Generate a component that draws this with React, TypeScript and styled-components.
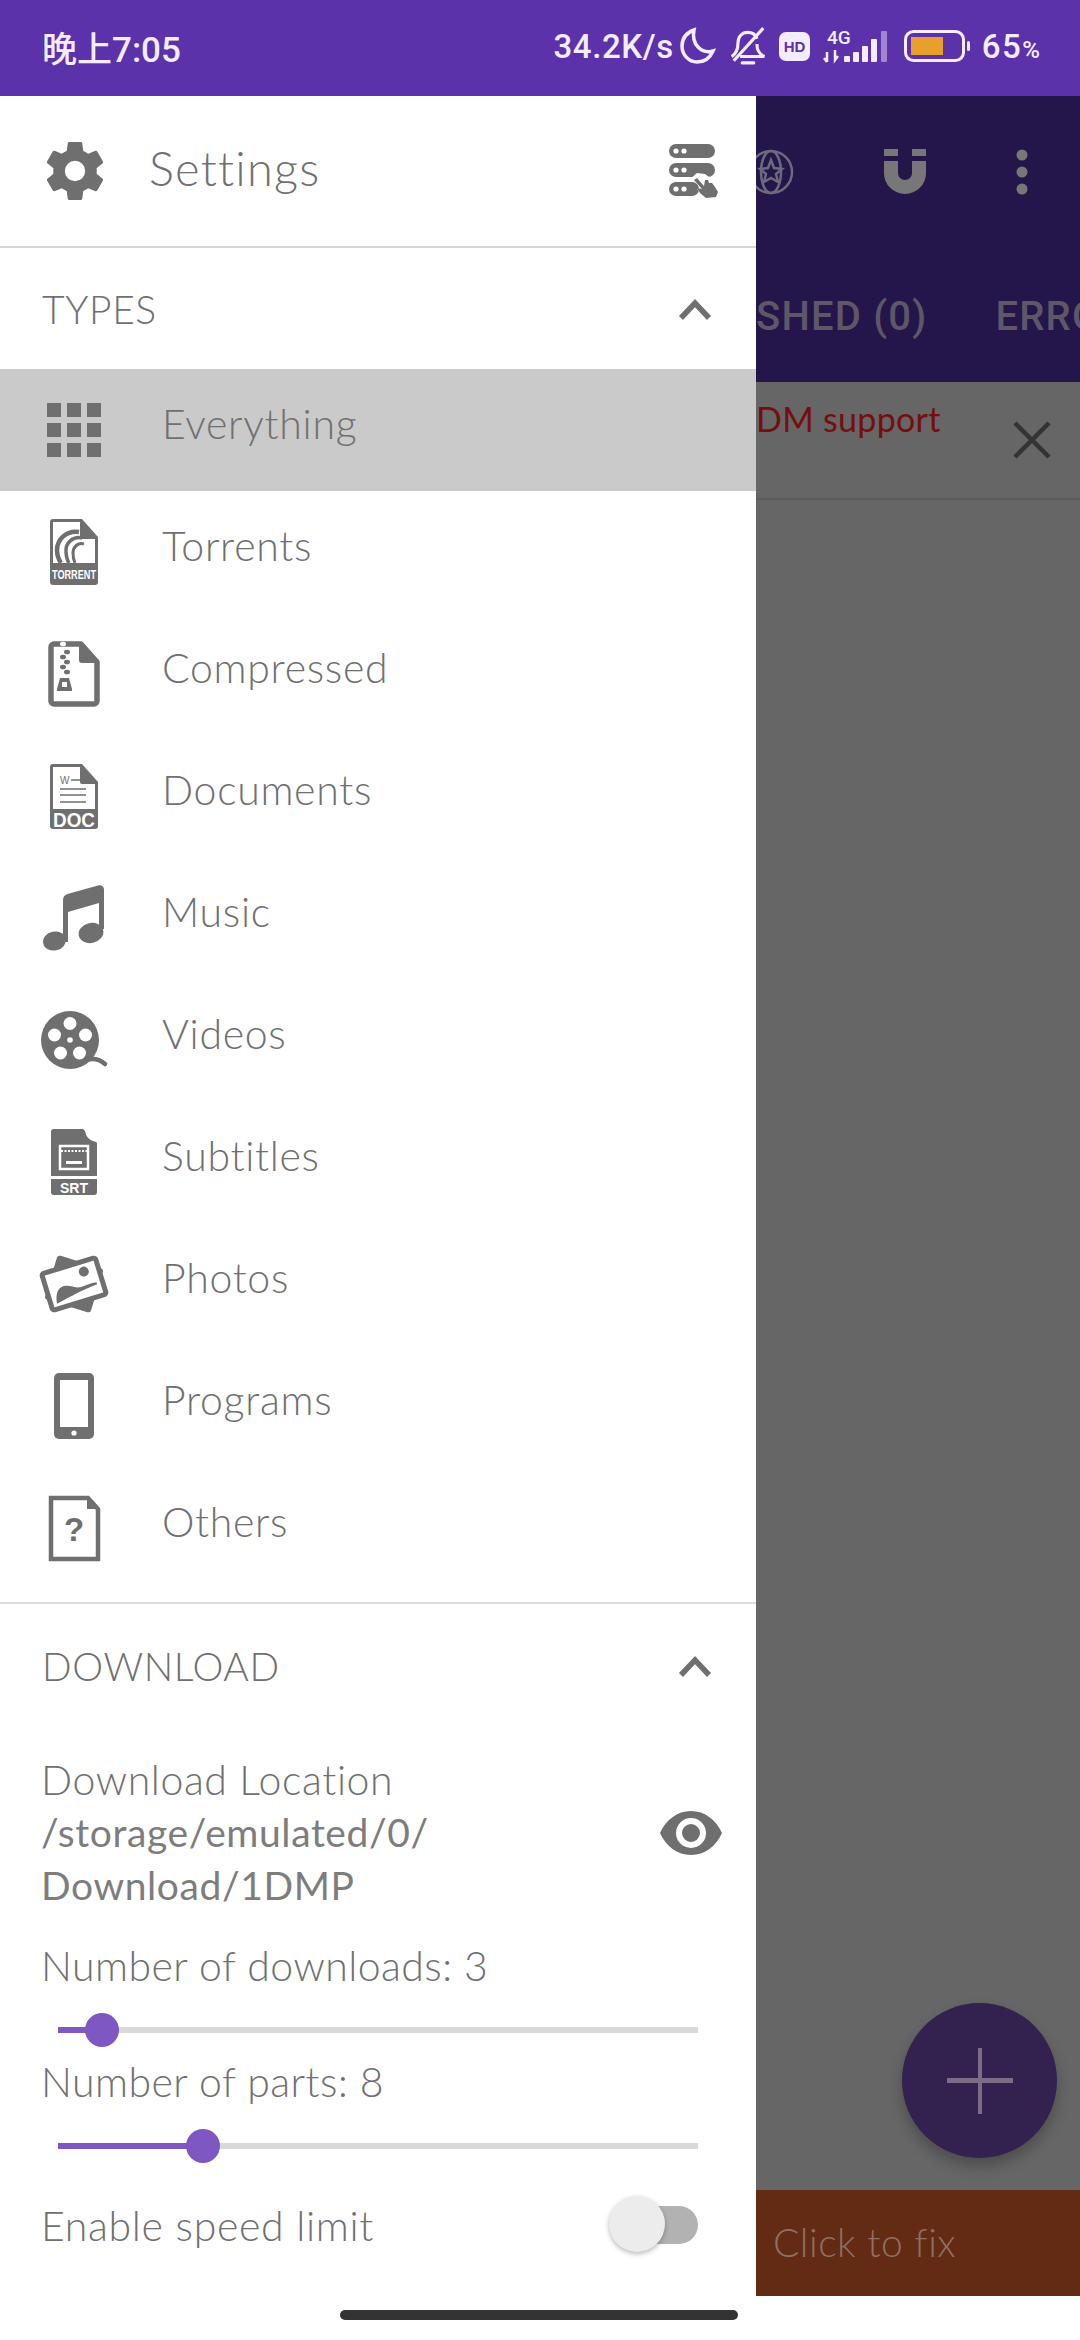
import React from "react";
import styled, { createGlobalStyle } from "styled-components";

const Global = createGlobalStyle`
  html, body { margin: 0; padding: 0; background: #fff; }
  * { box-sizing: border-box; }
`;

const GREY = "#707070";

const Screen = styled.div`
  position: relative;
  width: 1080px;
  height: 2340px;
  display: flex;
  flex-direction: column;
  overflow: hidden;
  font-family: "Lato", "Liberation Sans", sans-serif;
  background: #fff;
`;

const StatusBar = styled.header`
  height: 96px;
  flex: none;
  display: flex;
  align-items: center;
  justify-content: space-between;
  padding: 0 40px 4px 42px;
  background: #5b32a9;
  color: #f3ecfc;
  font-weight: 500;
`;
const Clock = styled.span`
  font-size: 35px;
  letter-spacing: 0;
  font-family: "Roboto", "Noto Sans CJK SC", sans-serif;
`;
const StatusRight = styled.div`
  display: flex;
  align-items: center;
`;
const Speed = styled.span`
  font-size: 33px;
  font-family: "Roboto", sans-serif;
  letter-spacing: 0.6px;
  margin-right: 6px;
`;
const StatusIcon = styled.svg<{ $gap: number }>`
  display: block;
  overflow: visible;
  margin-right: ${(p) => p.$gap}px;
`;
const Percent = styled.span`
  font-size: 33px;
  font-family: "Roboto", sans-serif;
  letter-spacing: 1.5px;
  small { font-size: 24px; letter-spacing: 0; }
`;

const Body = styled.div`
  flex: 1;
  display: flex;
  min-height: 0;
`;

const Drawer = styled.nav`
  width: 756px;
  flex: none;
  display: flex;
  flex-direction: column;
  background: #fff;
  color: ${GREY};
  font-weight: 300;
`;
const DrawerHead = styled.div`
  height: 152px;
  flex: none;
  display: flex;
  align-items: center;
  padding: 0 36px 0 47px;
  border-bottom: 2px solid #d6d6d6;
`;
const HeadTitle = styled.span`
  flex: 1;
  margin-left: 46px;
  padding-bottom: 6px;
  font-size: 47px;
  letter-spacing: 1.2px;
`;
const SectionHead = styled.div<{ $h: number }>`
  height: ${(p) => p.$h}px;
  flex: none;
  display: flex;
  align-items: center;
  justify-content: space-between;
  padding: 0 44px 0 42px;
  font-size: 39px;
  letter-spacing: 0.6px;
`;
const Row = styled.div<{ $active?: boolean }>`
  height: 122px;
  flex: none;
  display: flex;
  align-items: center;
  padding-left: 36px;
  background: ${(p) => (p.$active ? "#cacaca" : "#fff")};
`;
const RowIcon = styled.div`
  width: 76px;
  height: 76px;
  flex: none;
  display: flex;
  align-items: center;
  justify-content: center;
  svg { display: block; overflow: visible; }
`;
const RowLabel = styled.span`
  margin-left: 50px;
  padding-bottom: 14px;
  font-size: 41px;
  letter-spacing: 0.7px;
`;
const Rule = styled.div`
  height: 2px;
  flex: none;
  margin-top: 13px;
  background: #dcdcdc;
`;
const Location = styled.div`
  padding: 27px 34px 33px 41px;
  flex: none;
`;
const Line = styled.div`
  height: 52px;
  line-height: 52px;
  font-size: 41px;
  letter-spacing: 0.6px;
  white-space: nowrap;
`;
const PathRow = styled.div`
  display: flex;
  align-items: flex-start;
  justify-content: space-between;
`;
const PathText = styled.div`
  font-weight: 400;
  color: #7d7d7d;
  font-size: 39px;
  line-height: 52.5px;
  letter-spacing: 0.6px;
`;
const EyeBox = styled.div`
  margin-top: 5px;
  svg { display: block; }
`;
const SettingLabel = styled.div`
  height: 44px;
  line-height: 44px;
  padding-left: 41px;
  font-size: 41px;
  letter-spacing: 0.45px;
  flex: none;
`;
const SliderWrap = styled.div`
  height: 60px;
  margin: 12px 58px 0;
  flex: none;
  display: flex;
  align-items: center;
`;
const Track = styled.div`
  position: relative;
  width: 100%;
  height: 6px;
  background: #d9d9d9;
`;
const Fill = styled.div`
  height: 100%;
  background: #7e57c2;
`;
const Thumb = styled.div`
  position: absolute;
  top: -14px;
  width: 34px;
  height: 34px;
  margin-left: -17px;
  border-radius: 50%;
  background: #7e57c2;
`;
const SwitchRow = styled.div`
  height: 98px;
  flex: none;
  display: flex;
  align-items: center;
  justify-content: space-between;
  padding: 0 58px 0 41px;
  font-size: 41px;
  letter-spacing: 0.7px;
`;
const SwitchTrack = styled.div`
  position: relative;
  width: 76px;
  height: 38px;
  border-radius: 19px;
  background: #b2b2b2;
`;
const SwitchKnob = styled.div`
  position: absolute;
  left: -13px;
  top: -10px;
  width: 56px;
  height: 56px;
  border-radius: 50%;
  background: #ececec;
  box-shadow: 0 2px 5px rgba(0, 0, 0, 0.28);
`;

const Behind = styled.main`
  flex: 1;
  min-width: 0;
  display: flex;
  flex-direction: column;
  overflow: hidden;
  position: relative;
`;
const AppBar = styled.div`
  height: 286px;
  flex: none;
  background: #24164a;
  display: flex;
  flex-direction: column;
`;
const ActionRow = styled.div`
  height: 152px;
  flex: none;
  display: flex;
  align-items: center;
  svg { display: block; flex: none; }
`;
const Tabs = styled.div`
  display: flex;
  flex: 1;
  align-items: center;
  padding-top: 2px;
  color: #5e5768;
  font-family: "Roboto", sans-serif;
  font-weight: 500;
  font-size: 40px;
  letter-spacing: 1.2px;
  white-space: nowrap;
`;
const Tab = styled.span<{ $ml: number }>`
  margin-left: ${(p) => p.$ml}px;
`;
const Banner = styled.div`
  height: 118px;
  flex: none;
  display: flex;
  justify-content: space-between;
  background: #666;
  border-bottom: 2px solid #5c5c5c;
  color: #750f0f;
  font-size: 34px;
  font-weight: 400;
  letter-spacing: 0.3px;
  padding: 16px 28px 0 0;
  white-space: nowrap;
`;
const BannerClose = styled.svg`
  display: block;
  margin-top: 22px;
`;
const Scrim = styled.div`
  flex: 1;
  background: #666;
`;
const Warning = styled.div`
  height: 106px;
  flex: none;
  background: #632a14;
  color: #8f7062;
  font-size: 39px;
  font-weight: 300;
  letter-spacing: 0.5px;
  line-height: 104px;
  padding-left: 17px;
  white-space: nowrap;
`;
const Foot = styled.div`
  height: 44px;
  flex: none;
  background: #fff;
`;
const Fab = styled.div`
  position: absolute;
  left: 146px;
  top: 1907px;
  width: 155px;
  height: 155px;
  border-radius: 50%;
  background: #33214f;
  box-shadow: 0 8px 14px rgba(0, 0, 0, 0.25);
  display: flex;
  align-items: center;
  justify-content: center;
`;
const HomeBar = styled.div`
  position: absolute;
  left: 340px;
  top: 2310px;
  width: 398px;
  height: 10px;
  border-radius: 5px;
  background: #333;
`;

const C = "#6f6f6f";

const Gear = () => (
  <svg width="56" height="58" viewBox="2.6 2 18.8 20" fill={C}>
    <path fillRule="evenodd" d="M19.43 12.98c.04-.32.07-.64.07-.98s-.03-.66-.07-.98l2.11-1.65a.5.5 0 0 0 .12-.64l-2-3.46a.5.5 0 0 0-.61-.22l-2.49 1a7.3 7.3 0 0 0-1.69-.98l-.38-2.65A.49.49 0 0 0 14 2h-4a.49.49 0 0 0-.49.42l-.38 2.65c-.61.25-1.17.59-1.69.98l-2.49-1a.49.49 0 0 0-.61.22l-2 3.46a.49.49 0 0 0 .12.64l2.11 1.65c-.04.32-.07.65-.07.98s.03.66.07.98l-2.11 1.65a.5.5 0 0 0-.12.64l2 3.46c.12.22.39.3.61.22l2.49-1c.52.4 1.08.73 1.69.98l.38 2.65c.03.24.24.42.49.42h4c.25 0 .46-.18.49-.42l.38-2.65c.61-.25 1.17-.59 1.69-.98l2.49 1c.23.09.49 0 .61-.22l2-3.46a.5.5 0 0 0-.12-.64l-2.11-1.65zM12 15.5a3.5 3.5 0 1 1 0-7 3.5 3.5 0 0 1 0 7z" />
  </svg>
);

const ServerHand = () => (
  <svg width="52" height="54" viewBox="0 0 52 54">
    <rect x="1" y="0" width="46" height="14" rx="7" fill={C} />
    <rect x="1" y="19" width="46" height="14" rx="7" fill={C} />
    <rect x="1" y="38" width="30" height="14" rx="7" fill={C} />
    {[8, 16].map((x) =>
      [7, 26, 45].map((y) => <circle key={`${x}${y}`} cx={x} cy={y} r="2.6" fill="#fff" />)
    )}
    <path d="M22 35l7-6 8 1 11 8 4 10-3 6-11-1-9-8 5-1-9-9z" fill="#fff" />
    <path d="M26 36l3-2 7 8 1-6 3 0 1 3 3 0 3 4 3 5-2 5-10 1-6-5-3-5 5 1z" fill={C} />
  </svg>
);

const Chevron = () => (
  <svg width="34" height="22" viewBox="0 0 34 22" fill="none" stroke={C} strokeWidth="5.5">
    <path d="M3 20L17 5l14 15" />
  </svg>
);

const Grid = () => (
  <svg width="54" height="54" viewBox="0 0 54 54" fill={C}>
    {[0, 20, 40].map((y) =>
      [0, 20, 40].map((x) => <rect key={`${x}-${y}`} x={x} y={y} width="14" height="14" />)
    )}
  </svg>
);

const Torrent = () => (
  <svg width="48" height="66" viewBox="0 0 48 66">
    <path d="M3 0h29l16 18v45a3 3 0 0 1-3 3H3a3 3 0 0 1-3-3V3a3 3 0 0 1 3-3z" fill={C} />
    <path d="M3 3h27v15a2 2 0 0 0 2 2h13v24H3z" fill="#fff" />
    <g fill="none" stroke={C}>
      <path d="M29 13C17 11 7 20 7 31c0 5 2 10 4 13" strokeWidth="4.5" />
      <path d="M32 19c-9-2-17 5-16 14 .3 4 1 8 3 11" strokeWidth="3.5" />
      <path d="M34 25c-6-2-11 3-11 9 0 4 1 8 2 10" strokeWidth="3" />
    </g>
    <text x="24" y="60" textAnchor="middle" textLength="44" lengthAdjust="spacingAndGlyphs" fontFamily="Liberation Sans, sans-serif" fontWeight="700" fontSize="13" fill="#fff">TORRENT</text>
  </svg>
);

const Zip = () => (
  <svg width="52" height="66" viewBox="0 0 52 66">
    <path d="M6 3h27l16 18v39a3 3 0 0 1-3 3H6a3 3 0 0 1-3-3V6a3 3 0 0 1 3-3z" fill="none" stroke={C} strokeWidth="5.5" strokeLinejoin="round" />
    <path d="M31 2l19 20H34a3 3 0 0 1-3-3z" fill={C} />
    {[[15, 3], [19, 11], [15, 16], [19, 21], [15, 26], [19, 31]].map(([x, y], i) => (
      <ellipse key={y} cx={x} cy={y} rx="3" ry="2.3" fill={i === 0 ? "#fff" : C} />
    ))}
    <path d="M12 37h9l3 11v2H9v-2z" fill={C} />
    <rect x="14" y="41" width="5" height="5" fill="#fff" />
  </svg>
);

const Doc = () => (
  <svg width="48" height="65" viewBox="0 0 48 65">
    <path d="M3 0h29l16 18v44a3 3 0 0 1-3 3H3a3 3 0 0 1-3-3V3a3 3 0 0 1 3-3z" fill={C} />
    <path d="M3 3h27v15a2 2 0 0 0 2 2h13v25H3z" fill="#fff" />
    <text x="10" y="20" fontFamily="Liberation Sans, sans-serif" fontSize="10" fill={C}>W</text>
    <g stroke={C} strokeWidth="1.6">
      <path d="M21 16h9M10 25h26M10 31h26M10 38h26" />
    </g>
    <text x="24" y="63" textAnchor="middle" textLength="42" lengthAdjust="spacingAndGlyphs" fontFamily="Liberation Sans, sans-serif" fontWeight="700" fontSize="20" fill="#fff">DOC</text>
  </svg>
);

const Music = () => (
  <svg width="62" height="66" viewBox="0 0 62 66" fill={C}>
    <path d="M20 15c0-3 1.500-5 4.500-6L55 .5c3.500-1 6 1 6 4V44h-5V18l-31 9v30h-5z" />
    <ellipse cx="11.500" cy="56" rx="11.500" ry="9.500" transform="rotate(-12 11.500 56)" />
    <ellipse cx="48" cy="48" rx="12.500" ry="10" transform="rotate(-12 48 48)" />
  </svg>
);

const Film = () => (
  <svg width="67" height="58" viewBox="0 0 67 58">
    <circle cx="29" cy="29" r="29" fill={C} />
    {[[29, 12.500], [13.500, 24], [19.500, 42], [38.500, 42], [44.500, 24]].map(([x, y]) => (
      <circle key={x} cx={x} cy={y} r="6.500" fill="#fff" />
    ))}
    <circle cx="29" cy="29" r="2.800" fill="#fff" />
    <path d="M46 49c6-2 12-1 18 4" fill="none" stroke={C} strokeWidth="4.500" strokeLinecap="round" />
  </svg>
);

const Srt = () => (
  <svg width="46" height="66" viewBox="0 0 46 66">
    <path d="M3 0h29l14 14v33H0V3a3 3 0 0 1 3-3z" fill={C} />
    <path d="M34 0c0 7 4 12 12 13V0z" fill="#fff" />
    <path d="M0 50h46v13a3 3 0 0 1-3 3H3a3 3 0 0 1-3-3z" fill={C} />
    <rect x="9" y="17" width="28" height="23" fill="none" stroke="#fff" strokeWidth="2.500" />
    <path d="M10 22h26" stroke="#fff" strokeWidth="2" strokeDasharray="2 1.500" />
    <rect x="15" y="32" width="16" height="3" fill="#fff" />
    <text x="23" y="64" textAnchor="middle" fontFamily="Liberation Sans, sans-serif" fontWeight="700" fontSize="14" fill="#fff">SRT</text>
  </svg>
);

const Photos = () => (
  <svg width="66" height="62" viewBox="0 0 66 62">
    <rect x="9" y="8" width="48" height="46" rx="3" fill={C} transform="rotate(17 33 31)" />
    <g transform="rotate(-17 33 31)">
      <rect x="5" y="12" width="56" height="38" rx="2" fill="#fff" stroke={C} strokeWidth="5" />
      <circle cx="46" cy="22" r="5" fill={C} />
      <path d="M11 45c1-9 5-15 11-15 7 0 11 6 17 6 6 0 10-1 16 0v2c-14 1-30 4-44 7z" fill={C} />
    </g>
  </svg>
);

const Phone = () => (
  <svg width="40" height="66" viewBox="0 0 40 66">
    <rect width="40" height="66" rx="5" fill={C} />
    <rect x="6" y="7" width="28" height="47" fill="#fff" />
    <circle cx="20" cy="60" r="2.600" fill="#fff" />
  </svg>
);

const Other = () => (
  <svg width="52" height="66" viewBox="0 0 52 66">
    <path d="M3 3h37l10 11v50H3z" fill="none" stroke={C} strokeWidth="4.500" />
    <path d="M39 1l12 13H39z" fill={C} />
    <text x="26" y="46" textAnchor="middle" fontFamily="Liberation Sans, sans-serif" fontWeight="700" fontSize="33" fill={C}>?</text>
  </svg>
);

const Eye = () => (
  <svg width="62" height="44" viewBox="0 0 62 44">
    <path fillRule="evenodd" fill={C} d="M31 0C17 0 6 9 0 22c6 13 17 22 31 22s25-9 31-22C56 9 45 0 31 0zm0 37a15 15 0 1 1 0-30 15 15 0 0 1 0 30zm0-24a9 9 0 1 0 0 18 9 9 0 0 0 0-18z" />
  </svg>
);

const items: [string, React.ReactNode][] = [
  ["Everything", <Grid />],
  ["Torrents", <Torrent />],
  ["Compressed", <Zip />],
  ["Documents", <Doc />],
  ["Music", <Music />],
  ["Videos", <Film />],
  ["Subtitles", <Srt />],
  ["Photos", <Photos />],
  ["Programs", <Phone />],
  ["Others", <Other />],
];

const Slider = ({ at }: { at: number }) => (
  <SliderWrap>
    <Track>
      <Fill style={{ width: at }} />
      <Thumb style={{ left: at }} />
    </Track>
  </SliderWrap>
);

export default function App() {
  return (
    <Screen>
      <Global />
      <StatusBar>
        <Clock>晚上7:05</Clock>
        <StatusRight>
          <Speed>34.2K/s</Speed>
          <StatusIcon $gap={14} width="35" height="36" viewBox="0 0 35 36" fill="none" stroke="#f3ecfc" strokeWidth="3.500">
            <path d="M14 2C6 5 2 11 2 18c0 9 7 16 15 16 7 0 13-4 16-11-11 3-22-6-19-21z" />
          </StatusIcon>
          <StatusIcon $gap={12} width="38" height="40" viewBox="0 0 35 38" fill="none" stroke="#f3ecfc" strokeWidth="3">
            <path d="M2 29c5-3 6-8 6-13 0-6 4-10 9-10s8 3 9 6M26 17c0 5 1 9 7 12H10" />
            <path d="M4 33L32 2" />
            <path d="M12 35h11" strokeLinecap="round" />
          </StatusIcon>
          <StatusIcon $gap={14} width="31" height="29" viewBox="0 0 31 29">
            <rect width="31" height="29" rx="7" fill="#f3ecfc" />
            <text x="15.500" y="20" textAnchor="middle" fontFamily="Liberation Sans, sans-serif" fontWeight="700" fontSize="15" fill="#5b32a9">HD</text>
          </StatusIcon>
          <StatusIcon $gap={14} width="66" height="36" viewBox="0 0 66 36" fill="#f3ecfc">
            <text x="3" y="16" fontFamily="Roboto, sans-serif" fontWeight="500" fontSize="19">4G</text>
            <path d="M3 24v10M0 30l3 4M11 22v10l3-4" stroke="#f3ecfc" strokeWidth="2.500" fill="none" />
            <rect x="20" y="28" width="6" height="6" rx="1" />
            <rect x="29" y="24" width="6" height="10" rx="1" />
            <rect x="38" y="18" width="6" height="16" rx="1" />
            <rect x="47" y="11" width="6" height="23" rx="1" />
            <rect x="57" y="3" width="6" height="31" rx="1" opacity="0.45" />
          </StatusIcon>
          <StatusIcon $gap={12} width="66" height="32" viewBox="0 0 66 32">
            <rect x="1.500" y="1.500" width="58" height="29" rx="8" fill="none" stroke="#f3ecfc" strokeWidth="3" />
            <rect x="7" y="7" width="32" height="18" fill="#e89f2c" />
            <rect x="63" y="11" width="3" height="10" rx="1.500" fill="#f3ecfc" />
          </StatusIcon>
          <Percent>65<small>%</small></Percent>
        </StatusRight>
      </StatusBar>
      <Body>
        <Drawer>
          <DrawerHead>
            <Gear />
            <HeadTitle>Settings</HeadTitle>
            <ServerHand />
          </DrawerHead>
          <SectionHead $h={121}>
            <span>TYPES</span>
            <Chevron />
          </SectionHead>
          {items.map(([label, icon], i) => (
            <Row key={label} $active={i === 0}>
              <RowIcon>{icon}</RowIcon>
              <RowLabel>{label}</RowLabel>
            </Row>
          ))}
          <Rule />
          <SectionHead $h={123}>
            <span>DOWNLOAD</span>
            <Chevron />
          </SectionHead>
          <Location>
            <Line>Download Location</Line>
            <PathRow>
              <PathText>
                /storage/emulated/0/
                <br />
                Download/1DMP
              </PathText>
              <EyeBox>
                <Eye />
              </EyeBox>
            </PathRow>
          </Location>
          <SettingLabel>Number of downloads: 3</SettingLabel>
          <Slider at={44} />
          <SettingLabel>Number of parts: 8</SettingLabel>
          <Slider at={145} />
          <SwitchRow>
            <span>Enable speed limit</span>
            <SwitchTrack>
              <SwitchKnob />
            </SwitchTrack>
          </SwitchRow>
        </Drawer>
        <Behind>
          <AppBar>
            <ActionRow>
              <svg width="38" height="46" viewBox="0 0 38 46" fill="none" stroke="#6d6a7c" strokeWidth="2.500">
                <circle cx="15" cy="23" r="21" />
                <ellipse cx="15" cy="23" rx="10" ry="21" />
                <path d="M15 11l3 8 8 1-6 5 2 8-7-4-7 4 2-8-6-5 8-1z" />
              </svg>
              <svg style={{ marginLeft: 89 }} width="44" height="46" viewBox="0 0 44 46" fill="none">
                <path d="M8 12v12a14 14 0 0 0 28 0V12" stroke="#777" strokeWidth="14" />
                <rect x="1" y="0" width="14" height="7" fill="#777" />
                <rect x="29" y="0" width="14" height="7" fill="#777" />
              </svg>
              <svg style={{ marginLeft: 89 }} width="12" height="46" viewBox="0 0 12 46" fill="#777">
                <circle cx="6" cy="6" r="5.500" />
                <circle cx="6" cy="23" r="5.500" />
                <circle cx="6" cy="40" r="5.500" />
              </svg>
            </ActionRow>
            <Tabs>
              <Tab $ml={0}>SHED (0)</Tab>
              <Tab $ml={68}>ERROR</Tab>
            </Tabs>
          </AppBar>
          <Banner>
            <span>DM support</span>
            <BannerClose width="40" height="40" viewBox="0 0 40 40" stroke="#333" strokeWidth="4.500" fill="none">
              <path d="M3 3l34 34M37 3L3 37" />
            </BannerClose>
          </Banner>
          <Scrim />
          <Warning>Click to fix</Warning>
          <Foot />
          <Fab>
            <svg width="66" height="66" viewBox="0 0 66 66" fill="#7c6c86">
              <rect y="30" width="66" height="5" />
              <rect x="31" width="4" height="66" />
            </svg>
          </Fab>
        </Behind>
      </Body>
      <HomeBar />
    </Screen>
  );
}
